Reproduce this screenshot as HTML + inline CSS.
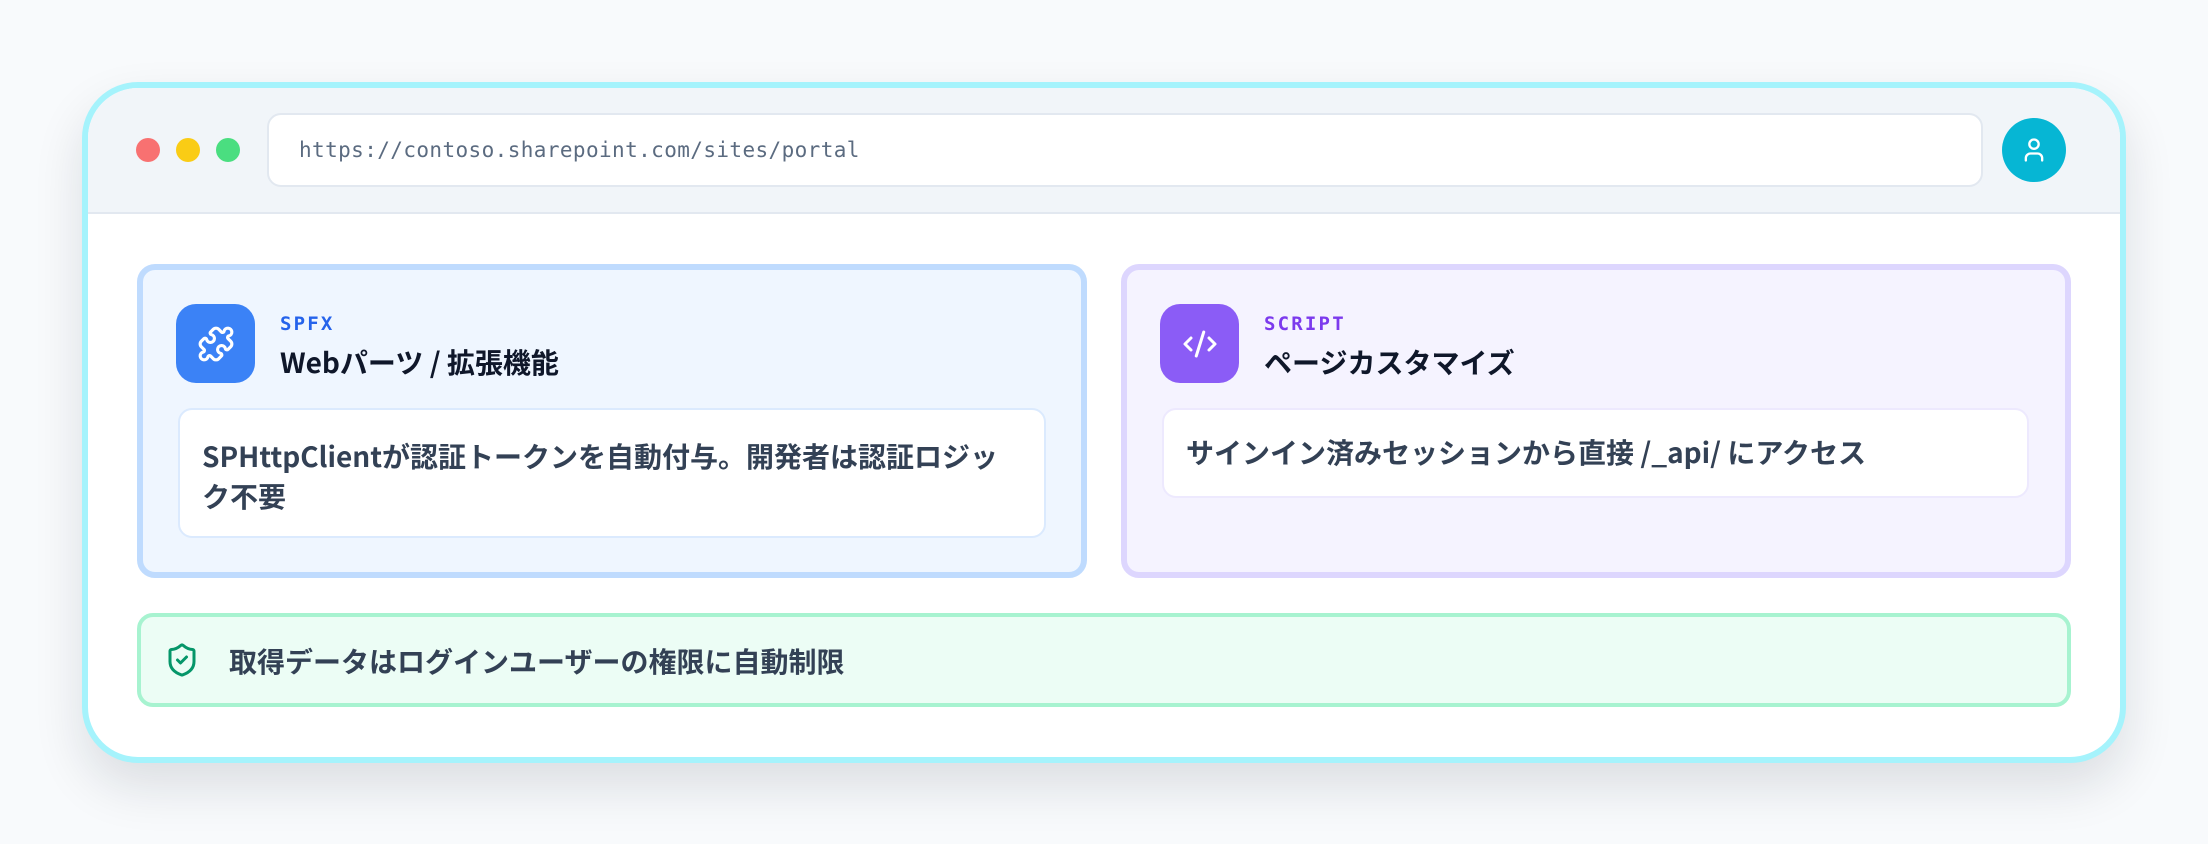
<!DOCTYPE html>
<html><head><meta charset="utf-8"><style>
*{box-sizing:border-box;margin:0;padding:0}
html,body{width:2208px;height:844px;overflow:hidden;background:#f8fafc}
body{position:relative;font-family:"Noto Sans CJK JP","Liberation Sans",sans-serif}
.abs{position:absolute}
.frame{left:82px;top:82px;width:2044px;height:681px;border:6px solid #a5f3fc;border-radius:56px;background:#fff;box-shadow:0 24px 50px rgba(15,23,42,.12);overflow:hidden}
.header{left:0;top:0;width:100%;height:126px;background:#f1f5f9;border-bottom:2px solid #e2e8f0}
.dot{width:24px;height:24px;border-radius:50%;top:50px}
.url{left:179px;top:25px;width:1716px;height:74px;background:#fff;border:2px solid #e2e8f0;border-radius:14px;font-family:"DejaVu Sans Mono","Liberation Mono",monospace;font-size:21px;color:#5b6b80;line-height:70px;padding-left:30px;letter-spacing:0.4px}
.avatar{left:1914px;top:30px;width:64px;height:64px;border-radius:50%;background:#06b6d4;display:flex;align-items:center;justify-content:center}
.card{top:264px;height:314px;border-radius:18px;border:6px solid}
.icon{width:79px;height:79px;border-radius:20px;display:flex;align-items:center;justify-content:center}
.lbl{font-family:"DejaVu Sans Mono","Liberation Mono",monospace;font-weight:bold;font-size:19px;letter-spacing:2.2px;line-height:24px}
.ttl{font-weight:bold;font-size:28px;color:#0f172a;white-space:nowrap;line-height:40px}
.box{background:#fff;border:2px solid;border-radius:14px;font-weight:bold;font-size:28px;color:#334155;line-height:40px;padding:26px 22px 0 22px}
</style></head><body>
<div class="abs frame">
  <div class="abs header">
    <div class="abs dot" style="left:48px;background:#f87171"></div>
    <div class="abs dot" style="left:88px;background:#facc15"></div>
    <div class="abs dot" style="left:128px;background:#4ade80"></div>
    <div class="abs url">https://contoso.sharepoint.com/sites/portal</div>
    <div class="abs avatar"><svg width="28" height="28" viewBox="0 0 24 24" fill="none" stroke="#fff" stroke-width="2" stroke-linecap="round" stroke-linejoin="round"><circle cx="12" cy="7" r="4"/><path d="M19 21v-2a4 4 0 0 0-4-4H9a4 4 0 0 0-4 4v2"/></svg></div>
  </div>
</div>

<div class="abs card" style="left:137px;width:950px;border-color:#bfdbfe;background:#eff6ff"></div>
<div class="abs icon" style="left:176px;top:304px;background:#3b82f6"><svg width="38" height="38" viewBox="0 0 24 24" fill="none" stroke="#fff" stroke-width="2" stroke-linecap="round" stroke-linejoin="round"><path d="M15.39 4.39a1 1 0 0 0 1.68-.474 2.5 2.5 0 1 1 3.014 3.015 1 1 0 0 0-.474 1.68l1.683 1.682a2.414 2.414 0 0 1 0 3.414L19.61 15.39a1 1 0 0 1-1.68-.474 2.5 2.5 0 1 0-3.014 3.015 1 1 0 0 1 .474 1.68l-1.683 1.682a2.414 2.414 0 0 1-3.414 0L8.61 19.61a1 1 0 0 0-1.68.474 2.5 2.5 0 1 1-3.014-3.015 1 1 0 0 0 .474-1.68l-1.683-1.682a2.414 2.414 0 0 1 0-3.414L4.39 8.61a1 1 0 0 1 1.68.474 2.5 2.5 0 1 0 3.014-3.015 1 1 0 0 1-.474-1.68l1.683-1.682a2.414 2.414 0 0 1 3.414 0z"/></svg></div>
<div class="abs lbl" style="left:280px;top:312px;color:#2563eb">SPFX</div>
<div class="abs ttl" style="left:280px;top:342px">Webパーツ / 拡張機能</div>
<div class="abs box" style="left:178px;top:408px;width:868px;height:130px;border-color:#dbeafe">SPHttpClientが認証トークンを自動付与。開発者は認証ロジック不要</div>

<div class="abs card" style="left:1121px;width:950px;border-color:#ddd6fe;background:#f5f3ff"></div>
<div class="abs icon" style="left:1160px;top:304px;background:#8b5cf6"><svg width="36" height="36" viewBox="0 0 24 24" fill="none" stroke="#fff" stroke-width="2" stroke-linecap="round" stroke-linejoin="round"><path d="m18 16 4-4-4-4"/><path d="m6 8-4 4 4 4"/><path d="m14.5 4-5 16"/></svg></div>
<div class="abs lbl" style="left:1264px;top:312px;color:#7c3aed">SCRIPT</div>
<div class="abs ttl" style="left:1264px;top:342px">ページカスタマイズ</div>
<div class="abs box" style="left:1162px;top:408px;width:867px;height:90px;border-color:#ede9fe;padding-top:22px">サインイン済みセッションから直接 /_api/ にアクセス</div>

<div class="abs" style="left:137px;top:613px;width:1934px;height:94px;border:4px solid #a7f3d0;background:#ecfdf5;border-radius:16px"></div>
<svg class="abs" style="left:164px;top:642px" width="36" height="36" viewBox="0 0 24 24" fill="none" stroke="#059669" stroke-width="2" stroke-linecap="round" stroke-linejoin="round"><path d="M20 13c0 5-3.5 7.5-7.66 8.95a1 1 0 0 1-.67-.01C7.5 20.5 4 18 4 13V6a1 1 0 0 1 1-1c2 0 4.5-1.2 6.24-2.72a1.17 1.17 0 0 1 1.52 0C14.51 3.81 17 5 19 5a1 1 0 0 1 1 1z"/><path d="m9 12 2 2 4-4"/></svg>
<div class="abs" style="left:229px;top:640px;font-weight:bold;font-size:28px;color:#334155;line-height:42px;white-space:nowrap">取得データはログインユーザーの権限に自動制限</div>
</body></html>
